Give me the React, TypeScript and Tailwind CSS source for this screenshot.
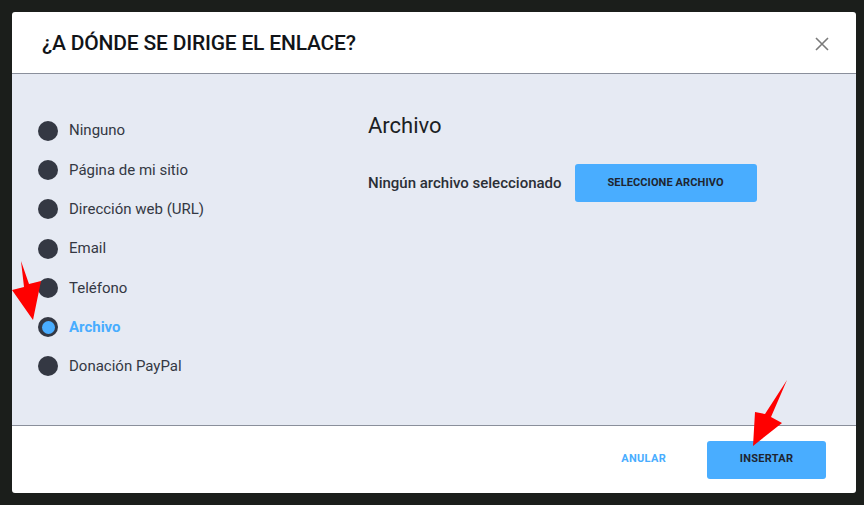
import { useState } from "react";

const options = [
    "Ninguno",
    "Página de mi sitio",
    "Dirección web (URL)",
    "Email",
    "Teléfono",
    "Archivo",
    "Donación PayPal",
];

function RadioRow({ label, checked, onSelect }: { label: string; checked: boolean; onSelect: () => void }) {
    return (
        <button onClick={onSelect} className="flex items-center h-[39.3px] gap-[11px] text-left">
            <span className="w-[20px] h-[20px] rounded-full bg-[#343843] flex items-center justify-center">
                {checked && <span className="w-[13px] h-[13px] rounded-full bg-[#49adff]" />}
            </span>
            <span className={checked ? "text-[15px] font-bold text-[#49adff]" : "text-[15px] text-[#343843]"}>
                {label}
            </span>
        </button>
    );
}

function Arrows() {
    return (
        <svg className="absolute inset-0 pointer-events-none" width="864" height="505">
            <polygon points="21,261 29,284 41,281 33,320 12,290 24,287" fill="#ff0000" />
            <polygon points="787,380 771,417 782,423 753,446 755,412 765,414" fill="#ff0000" />
        </svg>
    );
}

export default function App() {
    const [selected, setSelected] = useState("Archivo");

    return (
        <div className="relative w-[864px] h-[505px] bg-[#1b1e1b] p-[12px] pr-[8px]" style={{ fontFamily: "Roboto, 'Noto Sans', sans-serif" }}>
            <div className="w-[844px] h-[481px] bg-white rounded-[3px] flex flex-col overflow-hidden">
                <div className="h-[62px] shrink-0 flex items-center justify-between pl-[30px] pr-[27px] border-b border-[#8a8f9b]">
                    <h1 className="text-[21px] font-medium text-[#111418] tracking-[-0.2px] pt-[2px]">¿A DÓNDE SE DIRIGE EL ENLACE?</h1>
                    <button className="text-[#7a7a7a] mt-[2px]">
                        <svg width="14" height="14" viewBox="0 0 14 14" stroke="currentColor" strokeWidth="1.6" fill="none">
                            <path d="M1 1 L13 13 M13 1 L1 13" />
                        </svg>
                    </button>
                </div>
                <div className="h-[352px] shrink-0 bg-[#e6eaf3] border-b border-[#8a8f9b] flex">
                    <div className="w-[356px] shrink-0 flex flex-col pt-[37px] pl-[26px]">
                        {options.map((o) => (
                            <RadioRow key={o} label={o} checked={selected === o} onSelect={() => setSelected(o)} />
                        ))}
                    </div>
                    <div className="flex flex-col pt-[38px]">
                        <h2 className="text-[22px] text-[#1c1f24] leading-[28px]">Archivo</h2>
                        <div className="flex items-center mt-[24px] gap-[13px]">
                            <span className="text-[15px] font-medium text-[#2b2f36]">Ningún archivo seleccionado</span>
                            <button className="w-[182px] h-[38px] rounded-[3px] bg-[#49adff] text-[11px] font-bold text-[#1f2530] tracking-[0.1px]">
                                SELECCIONE ARCHIVO
                            </button>
                        </div>
                    </div>
                </div>
                <div className="flex-1 flex items-center justify-end pr-[30px] gap-[41px]">
                    <button className="text-[11px] font-bold text-[#49adff] tracking-[0.3px]">ANULAR</button>
                    <button className="w-[119px] h-[38px] rounded-[3px] bg-[#49adff] text-[11px] font-bold text-[#1f2530] tracking-[0.3px]">
                        INSERTAR
                    </button>
                </div>
            </div>
            <Arrows />
        </div>
    );
}
